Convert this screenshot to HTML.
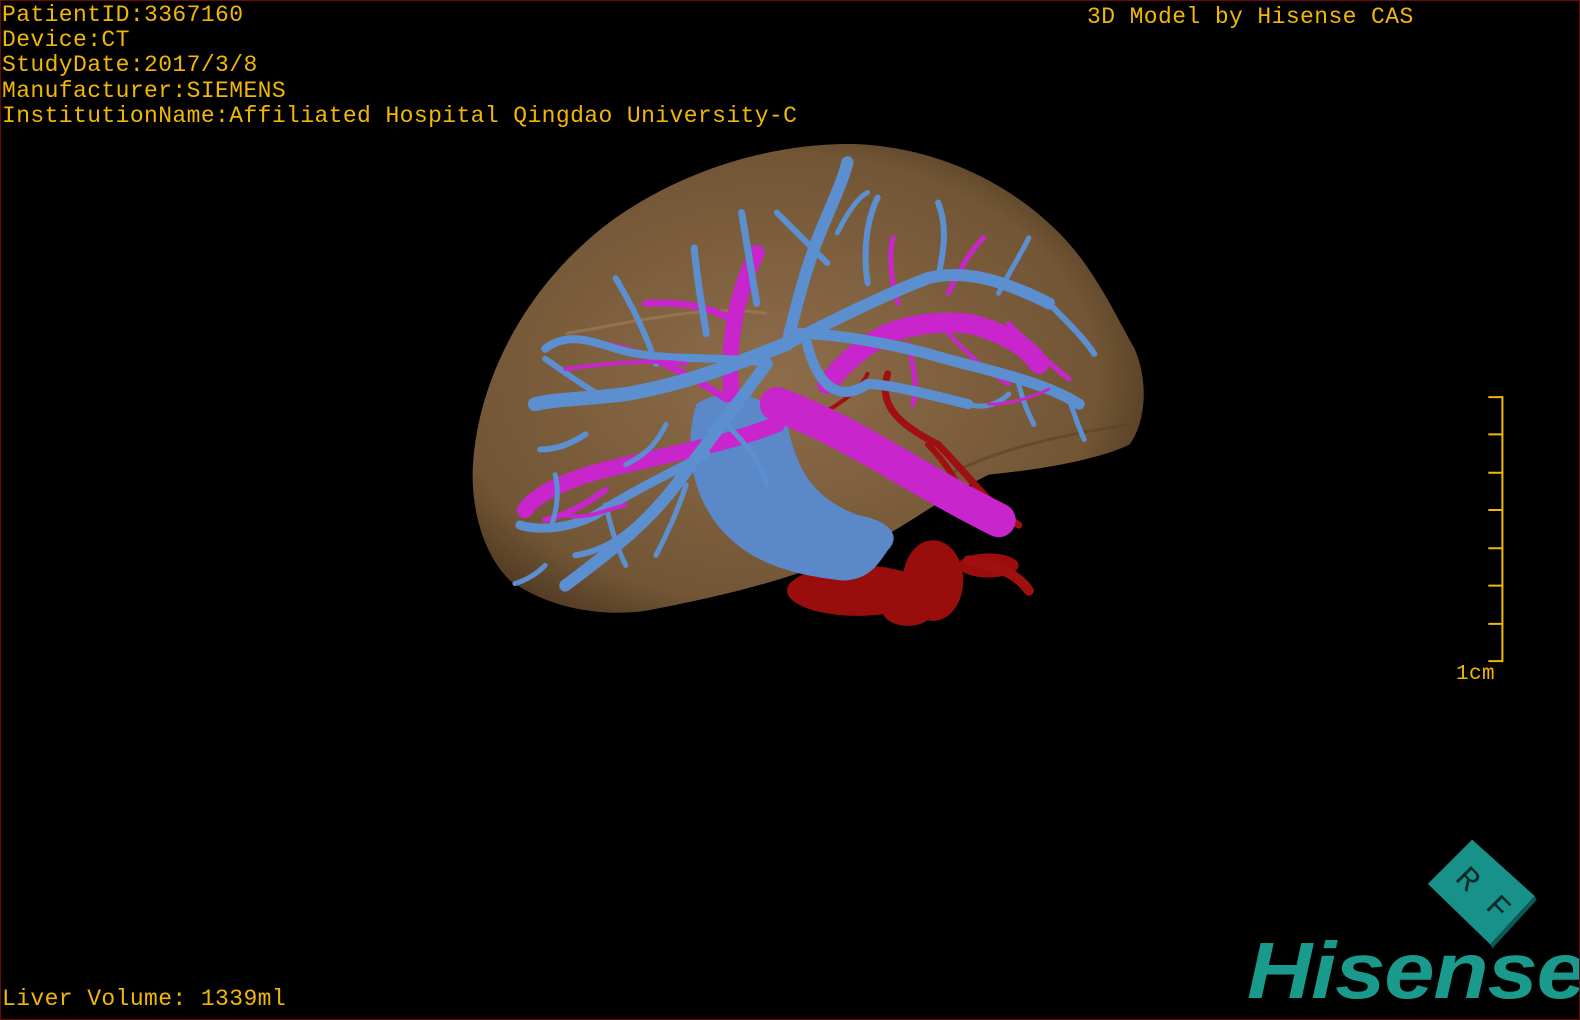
<!DOCTYPE html>
<html><head><meta charset="utf-8"><style>
html,body{margin:0;padding:0;background:#000;}
#w{position:relative;width:1580px;height:1020px;overflow:hidden;background:#000;box-sizing:border-box;border:1px solid #6a0b0b;}
svg{position:absolute;left:0;top:0;}
.t{position:absolute;color:#f2b705;font-family:"Liberation Mono",monospace;font-size:23px;line-height:25.2px;white-space:pre;letter-spacing:0.4px;}
</style></head><body><div id="w">
<svg width="1580" height="1020" viewBox="0 0 1568 1012" preserveAspectRatio="none">
<defs>
<radialGradient id="lg" cx="0.45" cy="0.5" r="0.6">
<stop offset="0" stop-color="#9a7650"/><stop offset="0.8" stop-color="#7c5d3a"/><stop offset="1" stop-color="#553e24"/>
</radialGradient>
</defs>
<path d="M468,470 C470,380 520,280 610,215 C690,160 780,140 850,142 C930,146 1000,180 1050,230 C1085,265 1105,310 1125,345 C1140,380 1135,420 1120,440 C1090,455 1030,465 980,470 C930,495 900,520 860,540 C800,570 720,590 640,605 C590,612 540,600 505,575 C480,550 468,510 468,470 Z" fill="url(#lg)" opacity="0.92"/>
<path d="M560,330 C620,320 700,300 760,310" stroke="#a08058" stroke-width="3" fill="none" opacity=".6"/>
<path d="M940,470 C1000,440 1060,430 1120,420" stroke="#5a4228" stroke-width="3" fill="none" opacity=".6"/>
<g fill="#9a0d0d">
<ellipse cx="925" cy="575" rx="30" ry="40"/>
<ellipse cx="850" cy="585" rx="70" ry="25"/>
<ellipse cx="900" cy="605" rx="25" ry="15"/>
<ellipse cx="980" cy="560" rx="30" ry="12"/>
</g>
<g stroke="#a01010" fill="none" stroke-linecap="round">
<path d="M960,555 C990,560 1010,570 1020,585" stroke-width="10"/>
<path d="M880,370 C870,400 890,420 930,440 C960,470 980,500 1010,520" stroke-width="7"/>
<path d="M860,370 C850,390 830,400 815,410" stroke-width="4"/>
<path d="M920,440 C940,460 950,480 960,500" stroke-width="6"/>
</g>
<path d="M690,400 C720,380 760,390 780,420 C790,460 800,490 850,510 C880,515 895,530 880,545 C870,560 860,575 835,575 C790,570 750,560 720,530 C690,500 675,450 690,400 Z" fill="#5a88c8"/>
<g stroke="#c826cc" fill="none" stroke-linecap="round" stroke-linejoin="round">
<path d="M770,400 C850,430 900,470 990,515" stroke-width="34"/>
<path d="M820,380 C860,330 900,315 960,320 C1000,330 1020,345 1030,360" stroke-width="20"/>
<path d="M725,390 C720,340 730,290 750,250" stroke-width="16"/>
<path d="M770,420 C720,440 660,450 600,465 C560,475 530,490 520,505" stroke-width="16"/>
<path d="M720,395 C690,375 640,345 590,340" stroke-width="7"/>
<path d="M640,300 C680,298 710,305 730,320" stroke-width="7"/>
<path d="M890,300 C885,280 880,260 885,235" stroke-width="5"/>
<path d="M940,290 C950,270 960,250 975,235" stroke-width="5"/>
<path d="M1000,320 C1020,340 1040,360 1060,375" stroke-width="5"/>
<path d="M600,485 C580,500 560,510 540,515" stroke-width="6"/>
<path d="M940,330 C960,350 980,370 1000,380" stroke-width="4"/>
<path d="M900,340 C905,360 910,380 905,400" stroke-width="5"/>
</g>
<g stroke="#5b8fd0" fill="none" stroke-linecap="round" stroke-linejoin="round">
<path d="M780,340 C730,360 680,380 620,390 C580,395 550,395 530,400" stroke-width="14"/>
<path d="M780,340 C790,300 800,260 815,225 C825,200 835,180 840,160" stroke-width="12"/>
<path d="M780,340 C830,315 880,290 920,275 C960,265 1000,280 1040,300" stroke-width="12"/>
<path d="M790,330 C830,330 880,340 920,350 C970,365 1030,375 1070,400" stroke-width="11"/>
<path d="M760,360 C730,400 700,440 670,480 C640,520 600,550 560,580" stroke-width="12"/>
<path d="M760,360 C720,350 660,360 610,345 C580,335 560,330 540,345" stroke-width="8"/>
<path d="M800,340 C810,380 830,400 860,380 C880,380 920,390 960,400" stroke-width="10"/>
<path d="M700,450 C660,470 620,490 590,510 C560,525 530,525 515,520" stroke-width="9"/>
<path d="M640,510 C620,530 600,545 570,550" stroke-width="6"/>
<path d="M750,300 C745,270 740,240 735,210" stroke-width="7"/>
<path d="M700,330 C695,300 690,270 688,245" stroke-width="7"/>
<path d="M650,360 C640,330 625,300 610,275" stroke-width="6"/>
<path d="M600,395 C575,380 555,365 540,355" stroke-width="6"/>
<path d="M580,430 C565,440 550,445 535,445" stroke-width="6"/>
<path d="M820,260 C800,240 785,225 770,210" stroke-width="6"/>
<path d="M860,280 C855,245 860,215 870,195" stroke-width="6"/>
<path d="M930,275 C935,250 940,225 930,200" stroke-width="6"/>
<path d="M990,290 C1000,270 1010,255 1020,235" stroke-width="5"/>
<path d="M1040,300 C1060,320 1075,335 1085,350" stroke-width="6"/>
<path d="M1060,395 C1065,410 1070,425 1075,435" stroke-width="5"/>
<path d="M1010,380 C1015,400 1020,410 1025,420" stroke-width="5"/>
<path d="M960,400 C975,405 990,400 1000,390" stroke-width="5"/>
<path d="M600,500 C605,520 610,540 620,560" stroke-width="5"/>
<path d="M540,560 C530,570 520,575 510,578" stroke-width="5"/>
<path d="M550,470 C555,490 550,510 545,525" stroke-width="5"/>
<path d="M680,480 C670,510 660,530 650,550" stroke-width="5"/>
<path d="M720,420 C740,440 755,460 760,480" stroke-width="5"/>
<path d="M830,230 C840,210 850,195 860,190" stroke-width="5"/>
<path d="M660,420 C650,440 640,450 620,460" stroke-width="5"/>
</g>
<g stroke="#c826cc" fill="none" stroke-linecap="round">
<path d="M560,365 C600,360 640,355 680,360" stroke-width="4"/>
<path d="M560,510 C580,515 600,505 620,500" stroke-width="4"/>
<path d="M980,400 C1000,400 1020,395 1040,385" stroke-width="3"/>
</g>
<g stroke="#f2b705" stroke-width="2" fill="none">
<path d="M1490,392 V656"/>
<path d="M1476,393 H1490 M1476,430 H1490 M1476,468 H1490 M1476,505 H1490 M1476,543 H1490 M1476,580 H1490 M1476,618 H1490 M1476,655 H1490"/>
</g>
<path d="M1416,876 L1460,832 L1522,888 L1478,936 Z" fill="#17918a"/>
<path d="M1478,936 L1522,888 L1524,892 L1480,940 Z" fill="#0b5a55"/>
<text x="1446" y="878" transform="rotate(45 1452 870)" font-family="Liberation Mono,monospace" font-size="32" fill="#0a2a28">R</text>
<text x="1476" y="906" transform="rotate(45 1482 898)" font-family="Liberation Mono,monospace" font-size="32" fill="#0a2a28">F</text>
</svg>
<div class="t" style="left:1px;top:2px;">PatientID:3367160
Device:CT
StudyDate:2017/3/8
Manufacturer:SIEMENS
InstitutionName:Affiliated Hospital Qingdao University-C</div>
<div class="t" style="left:1086px;top:4px;">3D Model by Hisense CAS</div>
<div class="t" style="left:1455px;top:661px;font-size:21px;">1cm</div>
<div class="t" style="left:1px;top:986px;">Liver Volume: 1339ml</div>
<div style="position:absolute;left:1246px;top:930px;font-family:'Liberation Sans',sans-serif;font-weight:bold;font-style:italic;font-size:80px;line-height:80px;color:#1a9a8c;letter-spacing:-1px;transform:scaleX(1.13);transform-origin:left top;">Hisense</div>
</div></body></html>
